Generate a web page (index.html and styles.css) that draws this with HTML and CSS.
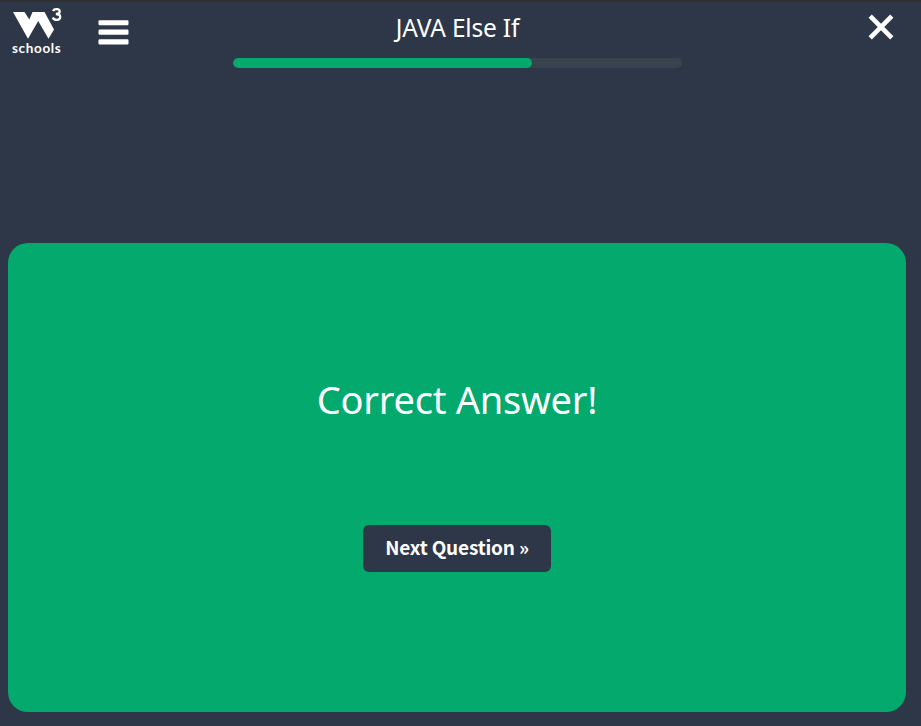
FILE: index.html
```html
<!DOCTYPE html>
<html lang="en">
<head>
<meta charset="utf-8">
<title>JAVA Else If</title>
<link rel="stylesheet" href="styles.css">
</head>
<body>
<header class="topbar">
  <div class="brand">
    <a class="logo" aria-label="schools">
      <svg class="mark" width="50" height="32" viewBox="12 7 50 32">
        <path fill="#fff" d="M13 12H24.500L29.300 19.500L32.500 12H44.500L54 29.500L48.500 38.700L38.200 21L28 38.700Z"/>
        <path fill="none" stroke="#fff" stroke-width="2.300" d="M53 10.900C54.200 8.300 59.700 8.500 59.700 11.500C59.700 13.500 58 14 55.800 14C58.600 14 60.200 15 60.200 17C60.200 20.500 54.100 20.900 52.800 17.500"/>
      </svg>
      <span class="brand-name">schools</span>
    </a>
    <svg class="menu" width="31" height="26" viewBox="0 0 31 26"><g fill="#fff"><rect x=".5" y=".3" width="30" height="5" rx="1.200"/><rect x=".5" y="9.500" width="30" height="5.200" rx="1.200"/><rect x=".5" y="19.300" width="30" height="5.200" rx="1.200"/></g></svg>
  </div>
  <div class="progress-area">
    <h1 class="title"><span>JAVA Else If</span></h1>
    <div class="track"><div class="fill"></div></div>
  </div>
  <svg class="close" width="26" height="26" viewBox="0 0 26 26"><path stroke="#fff" stroke-width="4.600" d="M2.200 2.200L23.800 23.800M23.800 2.200L2.200 23.800"/></svg>
</header>
<main class="card">
  <p class="message"><span>Correct Answer!</span></p>
  <button class="next"><span>Next Question »</span></button>
</main>
</body>
</html>
```
FILE: styles.css
```css
* { box-sizing: border-box; }
body { margin: 0; height: 726px; background: #2e3748; border-top: 2px solid #303033; color: #fff; font-family: "Noto Sans", sans-serif; overflow: hidden; }
.topbar { display: grid; grid-template-columns: 233px 449px 1fr; height: 241px; align-items: start; }
.brand { display: flex; align-items: flex-start; padding: 5px 0 0 12px; }
.logo { width: 50px; display: flex; flex-direction: column; }
.mark { display: block; }
.brand-name { font: 700 13.5px/14px "Lato", sans-serif; letter-spacing: .65px; white-space: nowrap; margin-top: 2px; }
.menu { margin: 13px 0 0 36px; }
.title { margin: 0; height: 56px; font-size: 24.5px; line-height: 52px; font-weight: 400; text-align: center; letter-spacing: -.2px; }
.title span, .message span, .next span { display: inline-block; white-space: nowrap; }
.track { height: 10px; border-radius: 5px; background: #38444d; overflow: hidden; }
.fill { width: 66.600%; height: 10px; border-radius: 5px; background: #04aa6d; }
.close { justify-self: end; margin: 12px 27px 0 0; }
.card { width: 898px; height: 469px; margin-left: 8px; border-radius: 20px; background: #04aa6d; display: flex; flex-direction: column; align-items: center; padding-top: 126px; }
.message { margin: 0; height: 156px; font-size: 38px; line-height: 60px; letter-spacing: -.25px; }
.next { width: 188px; height: 47px; border: 0; border-radius: 6px; padding: 0 0 3px; background: #2e3748; color: #fff; font: 700 19px/44px "Noto Sans CJK JP", sans-serif; letter-spacing: -.18px; }
```
